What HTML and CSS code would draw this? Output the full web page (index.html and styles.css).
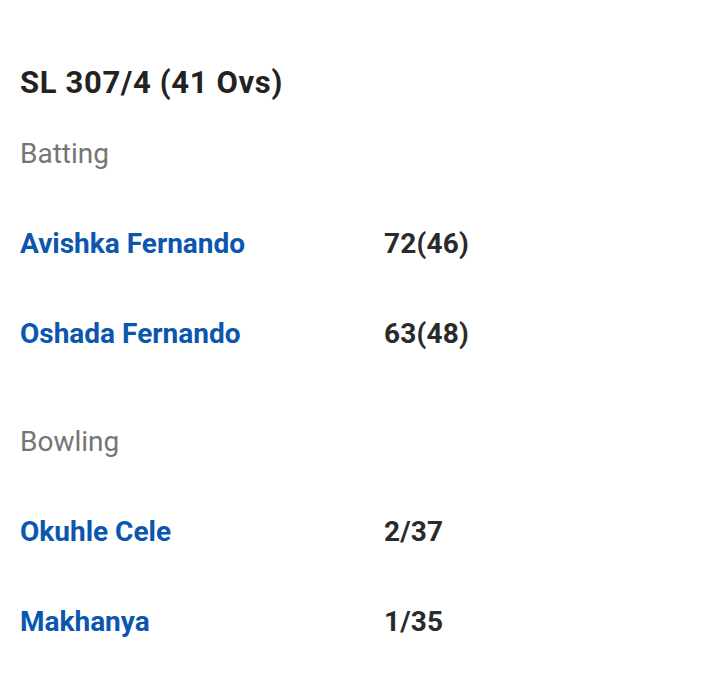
FILE: index.html
```html
<!DOCTYPE html>
<html>
<head>
<meta charset="utf-8">
<link rel="stylesheet" href="styles.css">
</head>
<body>
<div class="card">
  <h1 class="title">SL 307/4 (41 Ovs)</h1>
  <div class="section">
    <div class="label">Batting</div>
    <div class="row"><span class="name">Avishka Fernando</span><span class="stat">72(46)</span></div>
    <div class="row"><span class="name">Oshada Fernando</span><span class="stat">63(48)</span></div>
  </div>
  <div class="section">
    <div class="label">Bowling</div>
    <div class="row"><span class="name">Okuhle Cele</span><span class="stat">2/37</span></div>
    <div class="row"><span class="name">Makhanya</span><span class="stat">1/35</span></div>
  </div>
</div>
</body>
</html>
```
FILE: styles.css
```css
html, body {
  margin: 0;
  padding: 0;
  background: #ffffff;
}
body {
  font-family: Roboto, "Noto Sans", sans-serif;
}
.card {
  padding: 61px 20px 0 20px;
}
.title {
  margin: 0;
  font-size: 31px;
  letter-spacing: 0.65px;
  font-weight: 700;
  color: #222222;
  line-height: 44px;
}
.label {
  font-size: 28px;
  color: #757575;
  line-height: 40px;
  margin-top: 29px;
}
.row {
  display: grid;
  grid-template-columns: 364px auto;
  align-items: baseline;
  margin-top: 50px;
  line-height: 40px;
}
.row + .row {
  margin-top: 50px;
}
.name {
  font-size: 28px;
  font-weight: 700;
  color: #0b57b0;
}
.stat {
  font-size: 28px;
  font-weight: 700;
  color: #2a2a2a;
  letter-spacing: 0.2px;
}
.section + .section .label {
  margin-top: 68px;
}
```
